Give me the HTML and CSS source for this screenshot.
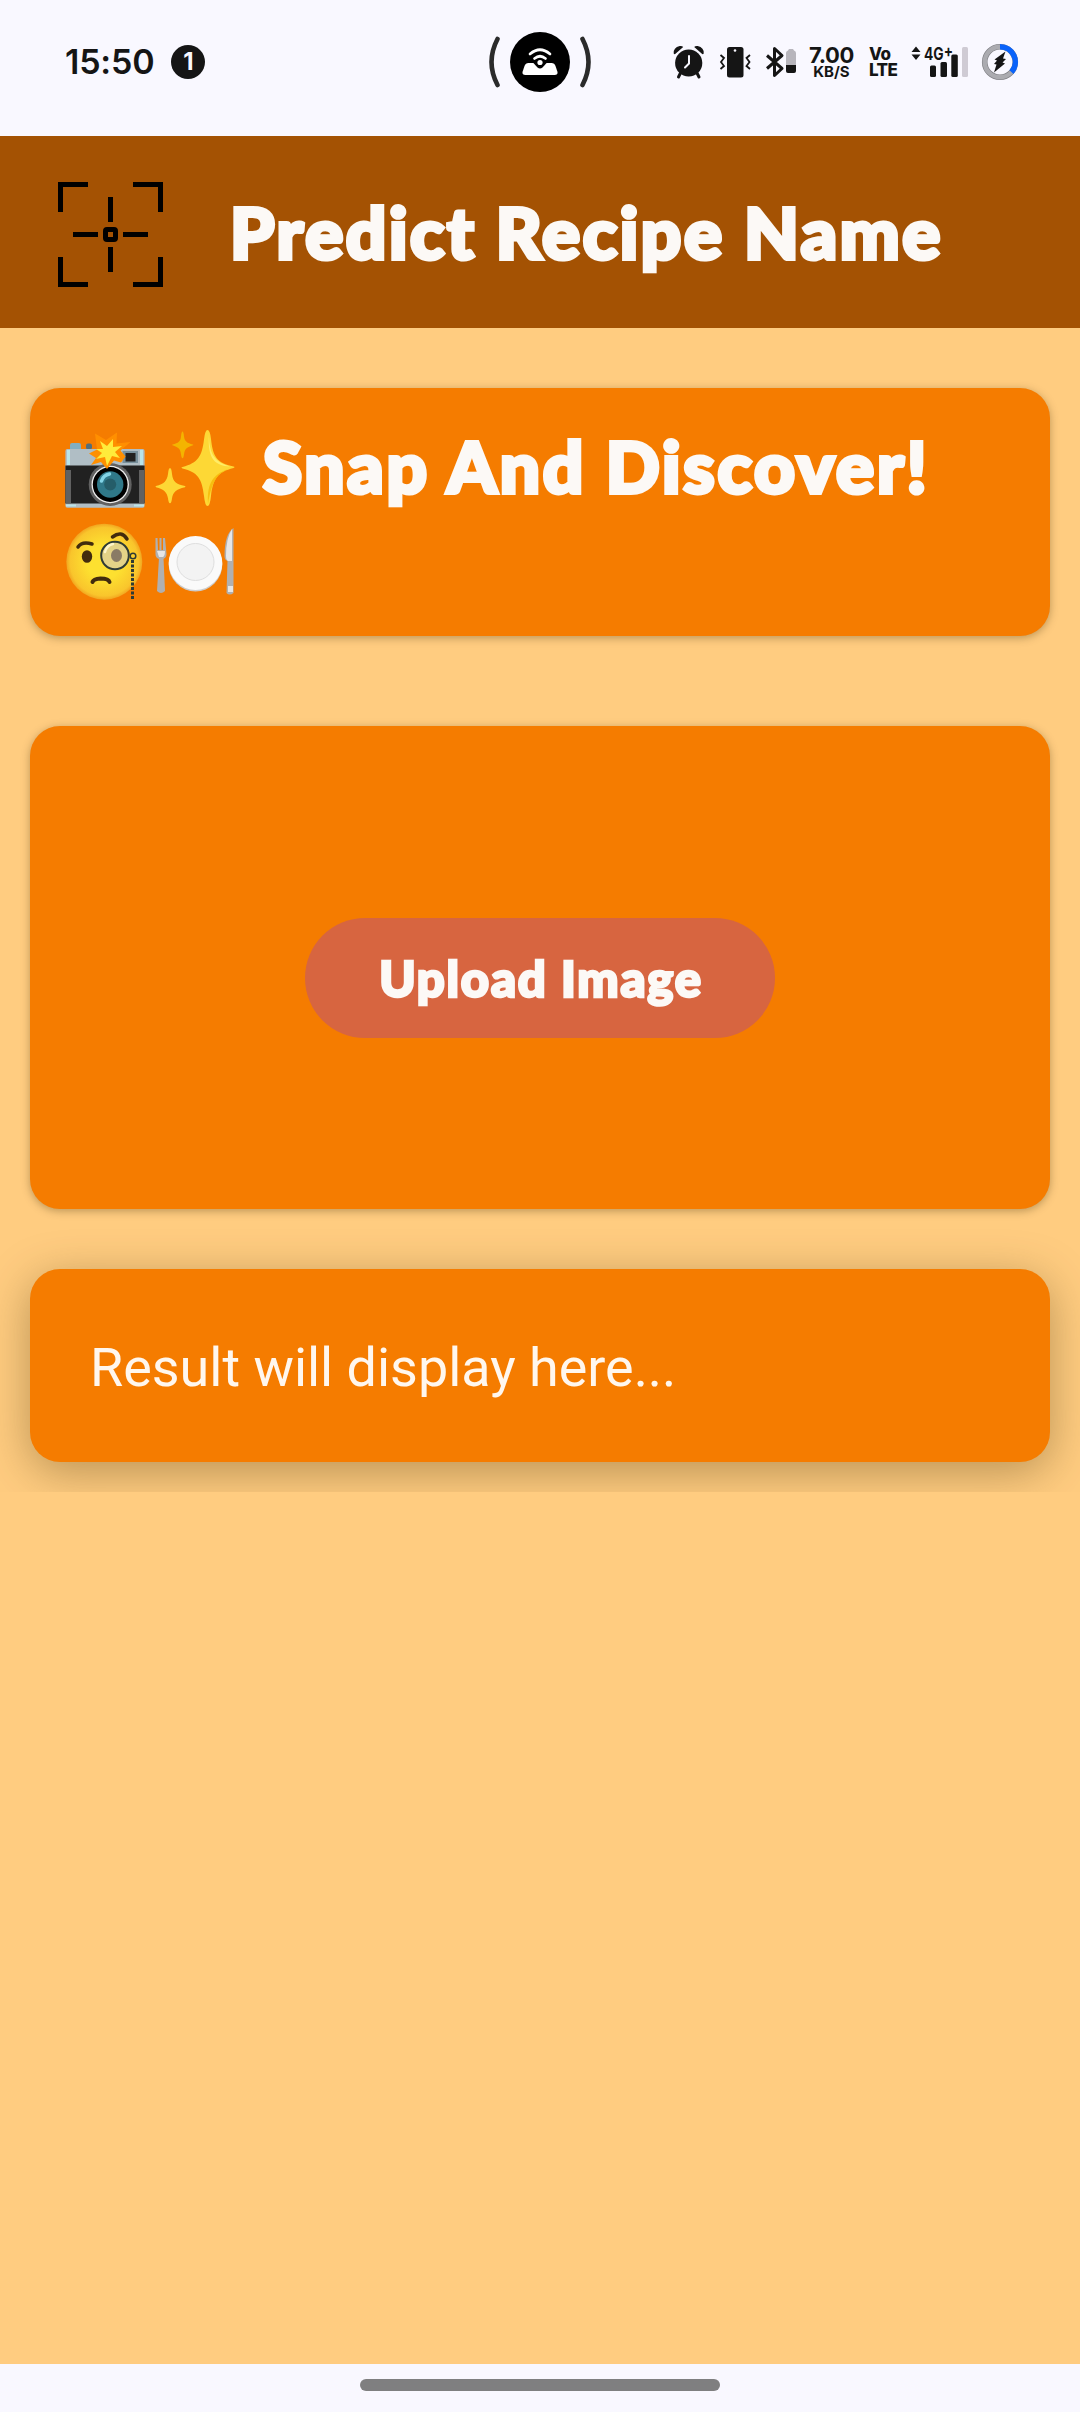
FILE: index.html
```html
<!DOCTYPE html>
<html lang="en">
<head>
<meta charset="utf-8">
<title>Predict Recipe Name</title>
<link rel="stylesheet" href="styles.css">
</head>
<body>
<div class="screen">
  <header class="status">
    <div class="status-left">
      <span class="clock">15:50</span>
      <span class="count">1</span>
    </div>
    <svg class="island" viewBox="486 28 108 68" width="108" height="68">
      <g fill="none" stroke="#2b2b2b" stroke-width="4.6" stroke-linecap="round"><path d="M497.500 39Q485.500 62 497.500 85"/><path d="M582.500 39Q594.500 62 582.500 85"/></g>
      <circle cx="540" cy="62" r="30"/>
      <path fill="#fff" d="M528.500 63h23q3 0 4 3l2 6q.5 3-3 3h-29q-3.500 0-3-3l2-6q1-3 4-3z"/>
      <path d="M532 61.500h16l-5.500 6q-2.500 2-5 0z"/>
      <g fill="none" stroke="#fff" stroke-width="2.700" stroke-linecap="round"><path d="M530 54q10-8.500 20 0"/><path d="M534.500 58.500q5.500-4.500 11 0"/></g>
      <circle cx="540" cy="62.500" r="2.600" fill="#fff"/>
    </svg>
    <div class="status-right">
      <svg viewBox="673 44 124 36" width="124" height="36" fill="#151515">
        <circle cx="688.700" cy="63" r="13.600"/>
        <path d="M673.700 53.500q-.5-6 6-7.500 2.500-.3 3.500 1l-8 7q-1 .5-1.500-.5zM703.700 53.500q.5-6-6-7.500-2.500-.3-3.500 1l8 7q1 .5 1.500-.5z"/>
        <path d="M680.500 73l-2 4M697 73l2 4" stroke="#151515" stroke-width="3" stroke-linecap="round"/>
        <path d="M689 56v7.500l-4 4" fill="none" stroke="#f9f8ff" stroke-width="2" stroke-linecap="round"/>
        <rect x="727" y="47" width="16.500" height="30.500" rx="2.500"/>
        <circle cx="735" cy="50.500" r="1.300" fill="#f9f8ff"/>
        <path d="M720.500 55l3.500 3-3 4 3 4-3.500 3M750 55l-3.500 3 3 4-3 4 3.500 3" fill="none" stroke="#151515" stroke-width="1.800"/>
        <path d="M767 55.500l15 13-7.500 7V48.500l7.500 7-15 13" fill="none" stroke="#151515" stroke-width="3" stroke-linejoin="round"/>
        <path fill="#b7b5bc" d="M786 53q0-2 2-2.500l1-1.500h4l1 1.500q2 .5 2 2.500v12h-10z"/>
        <path d="M786 65h10v6q0 2-2 2h-6q-2 0-2-2z"/>
      </svg>
      <div class="speed"><b>7.00</b><small>KB/S</small></div>
      <div class="volte"><span>Vo</span><span>LTE</span></div>
      <svg class="signal" viewBox="911 38 58 48" width="58" height="48" fill="#151515">
        <path d="M911.500 52l4.500-5.500 4.500 5.500zM911.500 54.500h9l-4.500 5.500z"/>
        <text class="net" x="924" y="60" textLength="29" lengthAdjust="spacingAndGlyphs">4G<tspan dy="-2.500">+</tspan></text>
        <rect x="930" y="65.500" width="6" height="11.500" rx="1.500"/><rect x="940.500" y="62" width="6.500" height="15" rx="1.500"/><rect x="951.300" y="54.500" width="6.500" height="22.500" rx="1.500"/><rect x="962" y="47" width="6" height="30" rx="1.500" fill="#cfcbd4"/>
      </svg>
      <svg class="charge" viewBox="981 43 38 38" width="38" height="38">
        <circle cx="1000" cy="62" r="15.300" fill="none" stroke="#7f7f84" stroke-width="5.600"/>
        <circle cx="1000" cy="62" r="15.300" fill="none" stroke="#ababb0" stroke-width="4.400"/>
        <path d="M1000 46.700a15.300 15.300 0 0 1 11.500 25.400" fill="none" stroke="#0a63fa" stroke-width="5.400"/>
        <path fill="#151515" d="M1005.500 51.500l-11 8 2.500 1-3 3.500 2.500.5-2.500 8 11-9-2.500-1 3.500-3.500-3-.5z"/>
      </svg>
    </div>
  </header>

  <div class="appbar">
    <svg class="scan" viewBox="0 0 105 105" width="105" height="105" fill="none" stroke="#000" stroke-width="5">
      <path d="M30 2.500H2.500V30M75 2.500h27.500V30M30 102.500H2.500V75M75 102.500h27.500V75M52.500 15v25M52.500 65v25M15 52.500h25M65 52.500h25"/>
      <rect x="47.500" y="47.500" width="10" height="10" rx="1.500"/>
    </svg>
    <h1 class="display title">Predict Recipe Name</h1>
  </div>

  <main class="content">
    <section class="card hero">
      <div class="hero-line">
        <svg class="emoji" viewBox="64 428 82 82" width="82" height="82" role="img" aria-label="camera with flash">
          <path fill="#82aec0" d="M70 445q0-2 2-2h7q2 0 2 2v6H70z"/><rect x="86" y="443.500" width="6" height="6" rx="2" fill="#546e7a"/>
          <rect x="65.400" y="449" width="79.200" height="58.700" rx="2" fill="#b0bec5"/>
          <path fill="#b9e4ea" d="M67 450h3v15h-3zM140 450h3v15h-3zM66 504.500h10v2H66zM134 504.500h10v2h-10z"/>
          <rect x="65.400" y="465.500" width="79.200" height="38" fill="#212121"/>
          <path fill="#616161" d="M66 470h5v33h-5zM139 470h5v33h-5z"/>
          <rect x="122.500" y="451" width="15.500" height="12" fill="#78909c"/><rect x="125.500" y="453" width="10" height="8.500" fill="#212121"/>
          <circle cx="110.200" cy="484.500" r="21.500" fill="#616161"/><circle cx="110.200" cy="484.500" r="18.700" fill="#eee"/><circle cx="110.200" cy="484.500" r="17.400" fill="#000"/><circle cx="110.200" cy="484.500" r="13.200" fill="#2f7889"/><circle cx="110.200" cy="484.500" r="6" fill="#255d69"/>
          <path d="M101.500 481q2-6 8-7" fill="none" stroke="#82d3e6" stroke-width="3.500" stroke-linecap="round"/>
          <path fill="#ff8f00" d="M95 433.500l11 6.500 11-7.500-.5 11 14-1.500-10 8.500 5 6 -4.500 6-7-2-7 8.500-6-7-10 3 5-7-7-4.500 8-4z"/>
          <path fill="#ffeb3b" d="M100 441l7 5 6-7 0 8 9-1-7 6 5 6-8-2-5 10-2-9-9 2 6-6-6-4h7z"/>
        </svg>
        <svg class="emoji" viewBox="154 428 82 82" width="82" height="82" role="img" aria-label="sparkles">
          <path fill="#fdd835" d="M207.500 430q2.500 0 3.500 9c2 18 6 24 22.500 27.500q2 .5 0 1.500c-16 4-20.500 11-22.500 28q-1 10-3.500 10t-3.500-10c-2-17-6-24-21.500-27.500q-2-1 0-1.500c15.500-4 19.500-11 21.500-27.500q1-9.500 3.500-9.500z"/>
          <path fill="#fff176" opacity=".8" d="M209 434c0 19 5 28 21 32.500-14-1-23-6-21-32.500z"/>
          <path fill="#f4b400" opacity=".7" d="M208 504c-1-22 5-30 23-36-14 5-19 13-23 36z"/>
          <path fill="#fdd835" d="M170 468q1.500 0 2 6c1 8 4 10 13 12q1 .7 0 1.200c-9 2-12 5-13 11q-.5 5-2 5t-2-5c-1-6-4-9-12-11q-1-.7 0-1.200c8-2 11-5 12-12q.5-6 2-6z"/>
          <path fill="#f4b400" d="M182.500 431.500q1 0 1.500 5c.7 5 3 6.500 9 8q.7.500 0 .8c-6 2-8 3-9 9q-.5 4-1.500 4t-1.500-4c-.7-6-3-7-8.500-9q-.7-.3 0-.8c6-1.500 8-3 8.500-8q.5-5 1.500-5z"/>
        </svg>
        <h2 class="display headline">Snap And Discover!</h2>
      </div>
      <div class="hero-line">
        <svg class="emoji" viewBox="64 522 82 82" width="82" height="82" role="img" aria-label="face with monocle">
          <defs><radialGradient id="skin"><stop offset=".45" stop-color="#fde030"/><stop offset=".9" stop-color="#f9c52c"/><stop offset="1" stop-color="#f2a51f"/></radialGradient></defs>
          <circle cx="104.300" cy="561.700" r="38" fill="url(#skin)"/>
          <path d="M78 547q4-6 14-3" fill="none" stroke="#422b0d" stroke-width="3.500" stroke-linecap="round"/>
          <path d="M112.500 537q9-7 14.500 2" fill="none" stroke="#422b0d" stroke-width="3.500" stroke-linecap="round"/>
          <ellipse cx="87" cy="556.500" rx="5.200" ry="6.300" fill="#422b0d"/>
          <circle cx="115" cy="555.500" r="13.800" fill="#e4d387" stroke="#2f3b35" stroke-width="2"/>
          <ellipse cx="116.500" cy="555.500" rx="5.500" ry="6.500" fill="#8a7b65"/>
          <path d="M105 552q2-7 8-8" fill="none" stroke="#fff6c8" stroke-width="2.500" stroke-linecap="round"/>
          <path d="M92.500 582q1-3 8-3.500 8 0 9 3.500" fill="none" stroke="#422b0d" stroke-width="4" stroke-linecap="round"/>
          <circle cx="133" cy="556" r="2.800" fill="none" stroke="#2f3b35" stroke-width="1.500"/>
          <path d="M132.500 560v40" fill="none" stroke="#2f3b35" stroke-width="3" stroke-dasharray="3 1.500"/>
        </svg>
        <svg class="emoji" viewBox="154 522 82 82" width="82" height="82" role="img" aria-label="fork and knife with plate">
          <g fill="#b0b0b0"><path d="M155.500 538h2l.5 12h1.500V538h2v12h1.500V538h2l1.500 16q0 4-3.500 5h-4q-3.500-1-3.500-5z"/><path d="M159 558h4.500l1.500 33q-4 4-8 0z"/><path d="M233.500 528v65q-4 3-7 0l1-32q-3-1-3-5 0-22 9-28z"/></g>
          <path fill="#e6e6e6" d="M157 551h8q0 5-2 6h-4zM232 529v32h-4q-2-1-2-5 0-18 6-27zM228 586h5v6h-5z"/>
          <ellipse cx="195.500" cy="564.500" rx="26.800" ry="27" fill="#ccc"/><ellipse cx="195.500" cy="563" rx="26.800" ry="27" fill="#fafafa"/>
          <circle cx="195.500" cy="562" r="18.500" fill="#f3f3f3" stroke="#dedede"/>
        </svg>
      </div>
    </section>

    <section class="card upload">
      <button class="display button">Upload Image</button>
    </section>

    <div class="result-wrap">
      <section class="card result">Result will display here...</section>
    </div>
  </main>

  <footer class="nav"><div class="handle"></div></footer>
</div>
</body>
</html>
```

FILE: styles.css
```css
* { box-sizing: border-box; }
body { margin: 0; }
.screen {
  width: 1080px;
  height: 2412px;
  display: flex;
  flex-direction: column;
  background: #ffcc80;
  overflow: hidden;
}
svg { display: block; flex: none; }

.status {
  height: 136px;
  padding: 0 61px 12px;
  display: grid;
  grid-template-columns: 1fr 108px 1fr;
  align-items: center;
  background: #f9f8ff;
  color: #151515;
  font-family: Inter, sans-serif;
}
.status-left { display: flex; align-items: center; gap: 17px; padding-left: 4px; }
.clock { font-size: 34px; font-weight: 600; line-height: 40px; letter-spacing: -0.200px; }
.count {
  width: 34px;
  height: 34px;
  border-radius: 50%;
  background: #151515;
  color: #f9f8ff;
  font-size: 24px;
  font-weight: 700;
  line-height: 34px;
  text-align: center;
}
.status-right { display: flex; align-items: center; justify-content: flex-end; }
.speed { display: flex; flex-direction: column; align-items: center; width: 47px; margin-left: 11px; }
.speed b { font-size: 22px; font-weight: 700; line-height: 19px; letter-spacing: -0.400px; }
.speed small { font-size: 15px; font-weight: 700; line-height: 13px; }
.volte {
  width: 27px;
  margin-left: 14px;
  display: flex;
  flex-direction: column;
  font-size: 17px;
  font-weight: 800;
  line-height: 16px;
  letter-spacing: -0.600px;
}
.signal { margin-left: 15px; }
.charge { margin-left: 12px; }
.net { font-size: 17px; font-weight: 700; }

.appbar {
  height: 192px;
  padding: 0 58px;
  display: flex;
  align-items: center;
  gap: 67px;
  background: #a45203;
}
.scan { margin-top: 5px; }
.display {
  margin: 0;
  color: #fcf9f6;
  font-family: Lato, sans-serif;
  font-weight: 900;
  -webkit-text-stroke: 4px #fcf9f6;
  stroke-linejoin: round;
  white-space: nowrap;
}
.title { font-size: 71px; line-height: 98px; letter-spacing: 2.600px; }

.content { flex: 1; padding: 60px 0 0; }
.card {
  margin: 0 30px;
  border-radius: 30px;
  background: #f57c00;
  box-shadow: 0 2px 9px rgba(80, 60, 20, .38);
}
.hero { height: 248px; padding: 40px 34px 0; }
.hero-line { display: flex; align-items: flex-start; gap: 8px; height: 94px; }
.headline { margin-left: 19px; font-size: 71px; line-height: 75px; letter-spacing: 2.800px; }
.upload {
  height: 483px;
  margin-top: 90px;
  padding-top: 21px;
  display: flex;
  align-items: center;
  justify-content: center;
}
.button {
  width: 470px;
  height: 120px;
  padding: 0 0 0 2px;
  border: 0;
  border-radius: 60px;
  background: #d76540;
  font-size: 49px;
  line-height: 120px;
  letter-spacing: 1.800px;
  -webkit-text-stroke-width: 2.600px;
}
.result-wrap {
  padding: 60px 0 30px;
  overflow: hidden;
}
.result {
  height: 193px;
  padding: 0 60px;
  color: #fff7ee;
  font-family: Roboto, sans-serif;
  font-size: 53.900px;
  line-height: 198px;
  box-shadow: 0 10px 46px rgba(80, 60, 20, .4);
}

.nav {
  height: 48px;
  padding-top: 15px;
  background: #f9f8ff;
}
.handle {
  width: 360px;
  height: 12px;
  margin: 0 auto;
  border-radius: 6px;
  background: #7f7f80;
}
```
